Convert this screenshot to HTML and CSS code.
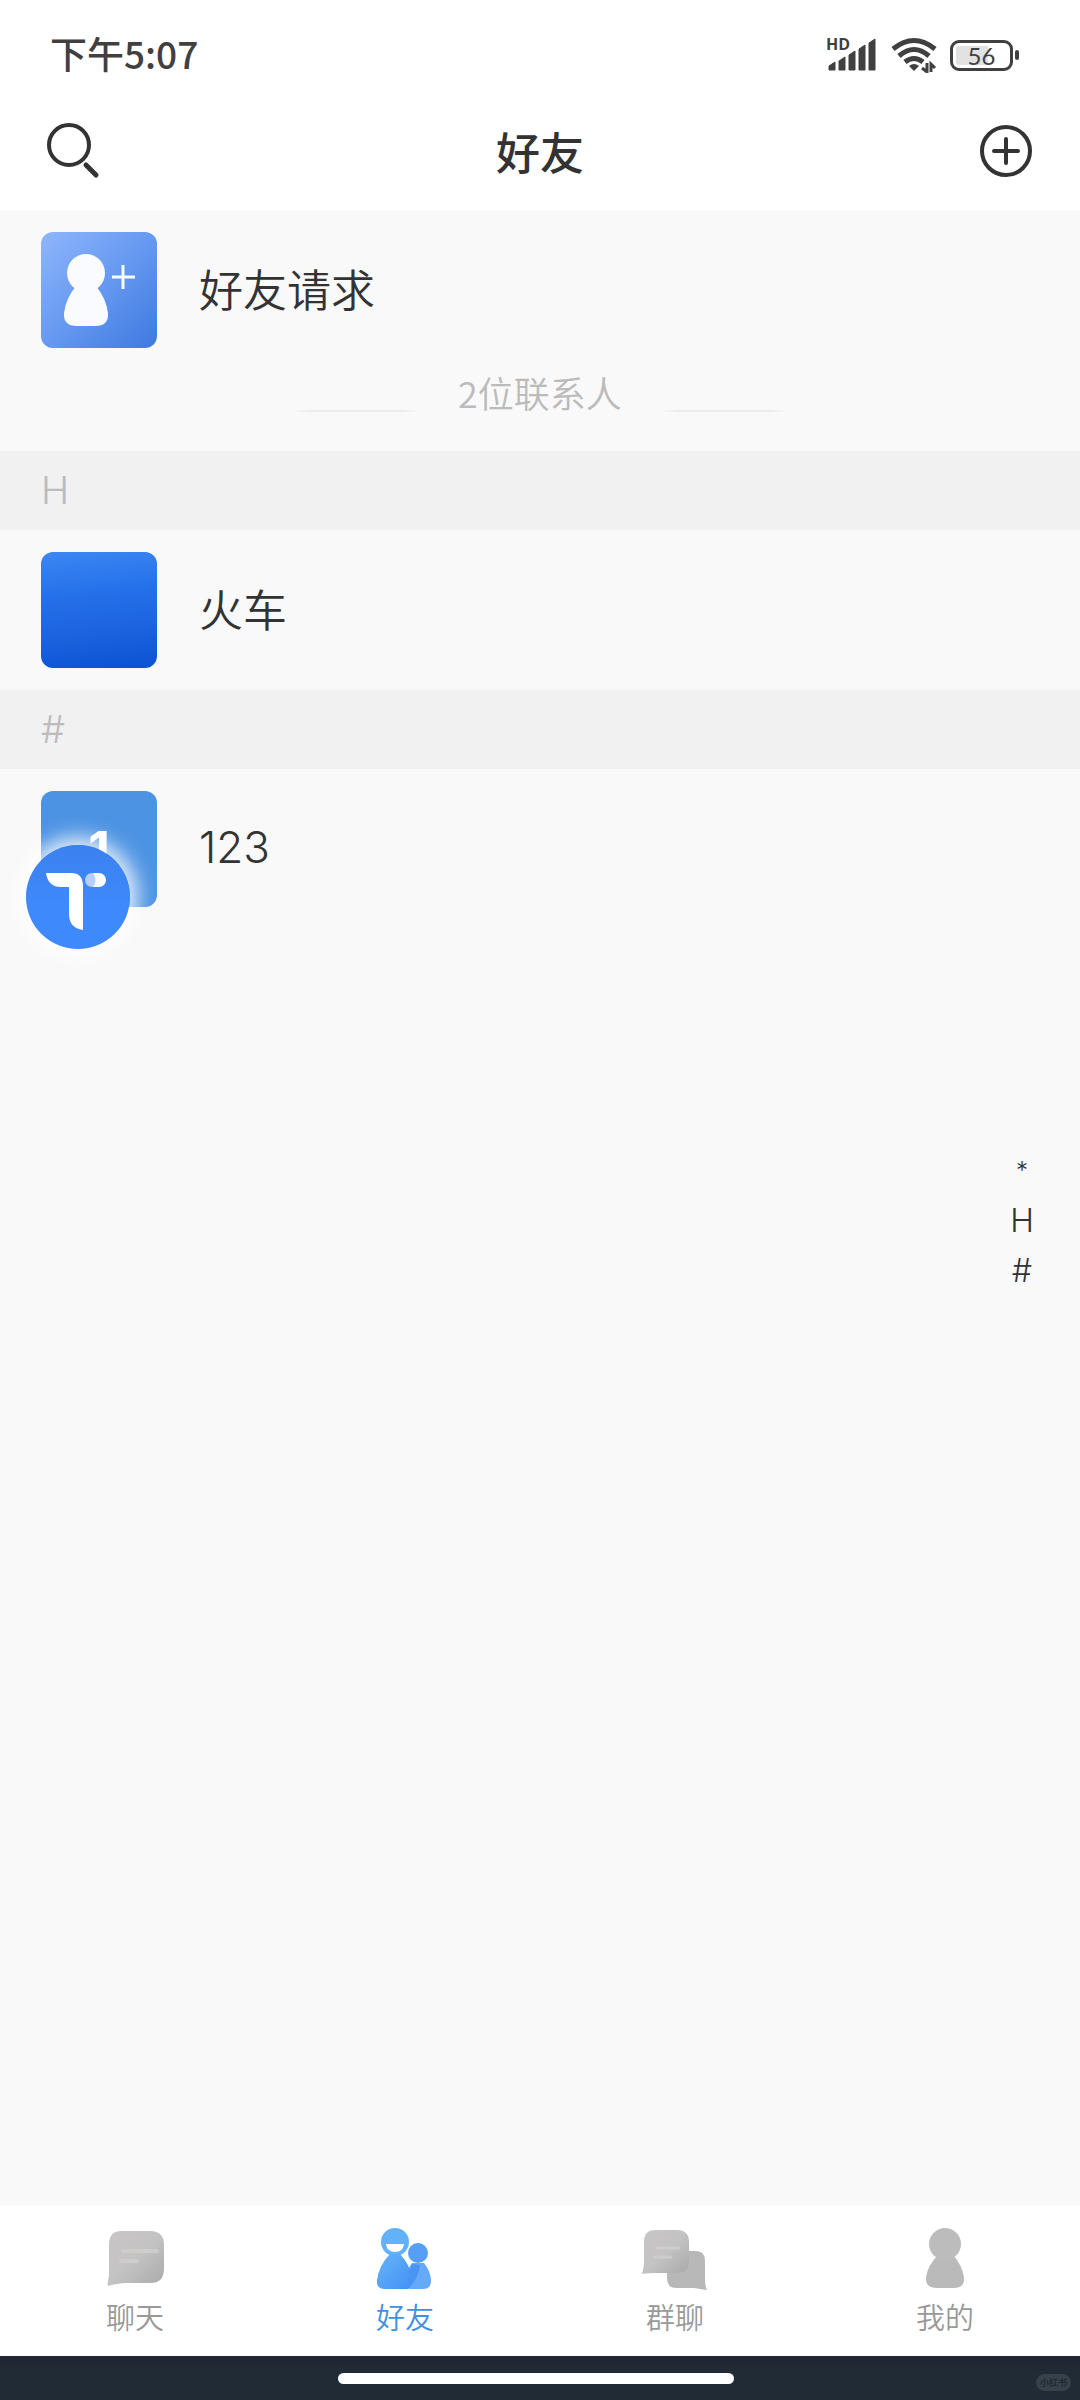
FILE: index.html
```html
<!DOCTYPE html>
<html lang="zh-CN">
<head>
<meta charset="utf-8">
<meta name="viewport" content="width=device-width, initial-scale=1">
<title>好友</title>
<link rel="stylesheet" href="styles.css">
</head>
<body>
<div class="app">
  <div class="status">
    <span class="status-time">下午5:07</span>
    <div class="status-icons">
      <svg class="signal" viewBox="0 -6 52 48" width="52" height="48" aria-hidden="true">
        <text x="0" y="13" class="hd">HD</text>
        <path d="M3 29l6-4v8H3zM13 24l6-4v13h-6zM23 18l6-4v19h-6zM33 12l6-4v25h-6zM43 6l6-4v31h-6z" fill="#404040" stroke="#404040" stroke-width="1" stroke-linejoin="round"/>
      </svg>
      <svg class="wifi" viewBox="0 0 46 36" width="46" height="36" aria-hidden="true">
        <g fill="none" stroke="#404040" stroke-width="5">
          <path d="M2 12Q23-5 44 12"/>
          <path d="M8 19Q23 6 38 19"/>
          <path d="M14 25Q23 18 32 25"/>
        </g>
        <path d="M18 29q5-4 10 0l-5 5z" fill="#404040"/>
        <path d="M36 26v9l-5-4M40 35v-8l4 4" fill="none" stroke="#404040" stroke-width="3"/>
      </svg>
      <div class="battery"><span class="battery-box">56</span><span class="battery-cap"></span></div>
    </div>
  </div>

  <header class="topbar">
    <button class="icon-btn" type="button" aria-label="搜索">
      <svg viewBox="0 0 56 56" width="56" height="56"><circle cx="25" cy="22" r="20" fill="none" stroke="#333" stroke-width="4"/><path d="M42 42l10 10" stroke="#333" stroke-width="5" stroke-linecap="round"/></svg>
    </button>
    <h1 class="title">好友</h1>
    <button class="icon-btn" type="button" aria-label="添加">
      <svg viewBox="4 0 56 56" width="56" height="56"><circle cx="30" cy="28" r="24" fill="none" stroke="#333" stroke-width="4"/><path d="M18 28h24M30 16v24" stroke="#333" stroke-width="4" stroke-linecap="round"/></svg>
    </button>
  </header>

  <main class="content">
    <a class="row" href="#requests">
      <span class="avatar avatar-request">
        <svg viewBox="0 0 116 116" width="116" height="116" aria-hidden="true">
          <circle cx="45" cy="41" r="19" fill="#f9fbff"/>
          <path d="M35 54H55Q65 66 67 81Q68 94 54 94H36Q22 94 23 81Q25 66 35 54Z" fill="#f9fbff"/>
          <path d="M71 45h23M82 33v24" stroke="#f9fbff" stroke-width="3"/>
        </svg>
      </span>
      <span class="name">好友请求</span>
    </a>
    <div class="count"><span class="rule"></span><span>2位联系人</span><span class="rule"></span></div>

    <h2 class="section" id="sec-h">H</h2>
    <a class="row" href="#train">
      <span class="avatar avatar-train"></span>
      <span class="name">火车</span>
    </a>
    <h2 class="section" id="sec-other">#</h2>
    <a class="row" href="#123">
      <span class="avatar avatar-number">1</span>
      <span class="name name-latin">123</span>
      <span class="floating">
        <svg viewBox="0 0 104 104" width="104" height="104" aria-hidden="true">
          <path d="M20 28H45Q57 28 57 41V85Q43 83 43 69V42H35Q22 42 20 28Z" fill="#fff"/>
          <circle cx="66" cy="35" r="7" fill="#b5d0ff"/>
          <path d="M67 28H73a7 7 0 0 1 0 14H67q5-7 0-14z" fill="#fff"/>
        </svg>
      </span>
    </a>

    <nav class="index" aria-label="索引">
      <a class="index-star" href="#top">*</a>
      <a href="#sec-h">H</a>
      <a href="#sec-other">#</a>
    </nav>
  </main>

  <nav class="tabs" aria-label="主导航">
    <a class="tab" href="#chat">
      <svg viewBox="0 0 68 64" width="68" height="64" aria-hidden="true">
        <defs>
          <linearGradient id="gray" x1="0" y1="0" x2="1" y2="1"><stop offset="0" stop-color="#c8c5c5"/><stop offset=".5" stop-color="#c4c3c3"/><stop offset="1" stop-color="#aaa9a9"/></linearGradient>
          <linearGradient id="blue" x1="0" y1="0" x2="1" y2="1"><stop offset="0" stop-color="#66b5f8"/><stop offset="1" stop-color="#4390f6"/></linearGradient>
        </defs>
        <path d="M20 4H49Q63 4 63 18V42Q63 56 49 56H24Q13 57 7 59Q6 58 8 48V18Q8 4 20 4Z" fill="url(#gray)"/>
        <path d="M22 24H56M20 34H36" stroke="#cfcdcc" stroke-width="4" stroke-linecap="round"/>
      </svg>
      <span>聊天</span>
    </a>
    <a class="tab tab-active" href="#friends" aria-current="page">
      <svg viewBox="0 0 68 64" width="68" height="64" aria-hidden="true">
        <circle cx="47" cy="26" r="10" fill="#559ff6"/>
        <path d="M41 36H53Q60 45 60 54Q60 62 52 62H38Q32 48 41 36Z" fill="#65a9f8"/>
        <circle cx="24" cy="15" r="14" fill="#62b2f9"/>
        <path d="M19 27H29Q39 38 41 50Q42 58 37 62H14Q5 62 6 53Q8 38 19 27Z" fill="url(#blue)"/>
        <path d="M41 37Q36 48 38 61Q47 52 49 38Z" fill="#4a94f3"/>
        <path d="M15 17H33Q32 25 24 25Q16 25 15 17Z" fill="#fff"/>
      </svg>
      <span>好友</span>
    </a>
    <a class="tab" href="#groups">
      <svg viewBox="1 0 68 64" width="68" height="64" aria-hidden="true">
        <path d="M42 24H56Q65 24 65 34V52Q65 59 67 63Q60 62 54 61H36Q27 61 27 51V36Z" fill="#b9b8b8"/>
        <path d="M15 3H37Q49 3 49 15V34Q49 46 37 46H14Q10 46 2 47Q4 41 4 35V15Q4 3 15 3Z" fill="url(#gray)"/>
        <path d="M17 21H39M14 30H31" stroke="#cfcdcc" stroke-width="3" stroke-linecap="round"/>
      </svg>
      <span>群聊</span>
    </a>
    <a class="tab" href="#me">
      <svg viewBox="0 0 68 64" width="68" height="64" aria-hidden="true">
        <path d="M27 28H42Q51 38 53 50Q54 61 43 61H26Q14 61 15 50Q17 38 27 28Z" fill="#bbbaba"/>
        <circle cx="34" cy="17" r="16" fill="#bdbcbc"/>
      </svg>
      <span>我的</span>
    </a>
  </nav>
  <footer class="gesture"><span class="home-bar"></span><span class="mark">小红书</span></footer>
</div>
</body>
</html>
```

FILE: styles.css
```css
* { box-sizing: border-box; }

body {
  margin: 0;
  background: #f9f9f9;
  color: #333;
  font-family: "Noto Sans CJK SC", sans-serif;
}

a { color: inherit; text-decoration: none; }

.app { display: flex; flex-direction: column; min-height: 100vh; }

.status {
  display: flex;
  align-items: center;
  justify-content: space-between;
  height: 110px;
  padding: 0 61px 0 50px;
  background: #fff;
  color: #404040;
}
.status-time { padding-bottom: 4px; font-size: 37px; font-weight: 500; line-height: 48px; }
.status-icons { display: flex; align-items: center; gap: 13px; }
.signal, .wifi { display: block; }
.hd { font: 700 16px "Open Sans", sans-serif; fill: #404040; }
.battery { display: flex; align-items: center; gap: 2px; }
.battery-box {
  width: 63px;
  height: 31px;
  border: 3px solid #404040;
  border-radius: 9px;
  background: linear-gradient(90deg, #e2e2e2 32px, #fff 32px) content-box;
  padding: 3px;
  font: 400 24px/19px Lato, sans-serif;
  text-align: center;
}
.battery-cap { width: 4px; height: 10px; border-radius: 2px; background: #404040; }

.topbar {
  display: flex;
  align-items: center;
  justify-content: space-between;
  height: 100px;
  padding: 0 44px 18px;
  background: #fff;
}
.icon-btn { padding: 0; border: 0; background: none; }
.icon-btn svg { display: block; overflow: visible; }
.title { margin: 0; font-size: 44px; font-weight: 500; line-height: 56px; }

.content { position: relative; flex: 1; }

.row {
  position: relative;
  display: flex;
  align-items: center;
  gap: 42px;
  height: 160px;
  padding: 0 41px;
}
.avatar {
  display: flex;
  align-items: center;
  justify-content: center;
  width: 116px;
  height: 116px;
  border-radius: 12px;
  overflow: hidden;
}
.avatar-request { background: linear-gradient(135deg, #8fb6fb, #6699f1 50%, #3d79df); }
.avatar-train { background: linear-gradient(174deg, #3c87f2, #2571ea 35%, #1d64e0 65%, #0b52d3); }
.avatar-number {
  background: #4d93e3;
  color: #fff;
  font: 700 50px Inter, sans-serif;
}
.name { padding-bottom: 4px; font-size: 44px; font-weight: 350; line-height: 56px; }
.name-latin { font-family: Inter, sans-serif; font-weight: 300; }

.floating {
  position: absolute;
  left: 26px;
  top: 76px;
  width: 104px;
  height: 104px;
  border-radius: 50%;
  background: linear-gradient(#3c80ef, #3e8afc 60%);
  box-shadow: 0 0 20px 8px rgba(255, 255, 255, .85);
}

.count {
  display: flex;
  align-items: flex-end;
  justify-content: center;
  gap: 37px;
  height: 81px;
  padding-bottom: 35px;
  color: #bbb;
  font-size: 36px;
  font-weight: 350;
  line-height: 48px;
}
.rule {
  width: 130px;
  height: 2px;
  margin-bottom: 4px;
  background: linear-gradient(90deg, transparent, #ececec 15%, #ececec 85%, transparent);
}

.section {
  height: 79px;
  margin: 0;
  padding: 0 41px;
  background: #f1f1f1;
  color: #bbb;
  font-family: Inter, sans-serif;
  font-size: 38px;
  font-weight: 300;
  line-height: 79px;
}

.index {
  position: absolute;
  top: 936px;
  right: 40px;
  display: flex;
  flex-direction: column;
  width: 36px;
  text-align: center;
  font-family: Inter, sans-serif;
  font-size: 32px;
  font-weight: 300;
  line-height: 50px;
}
.index-star { font-size: 24px; }

.tabs {
  display: grid;
  grid-template-columns: repeat(4, 1fr);
  height: 150px;
  background: #fff;
  color: #999;
}
.tab {
  display: flex;
  flex-direction: column;
  align-items: center;
  gap: 5px;
  padding-top: 21px;
  font-size: 29px;
  font-weight: 350;
  line-height: 40px;
}
.tab-active { color: #4390e0; }

.gesture {
  position: relative;
  display: flex;
  align-items: center;
  justify-content: center;
  height: 44px;
  padding-right: 8px;
  background: linear-gradient(#212632, #212b35 40%);
}
.home-bar { width: 37%; height: 11px; border-radius: 6px; background: #fff; }
.mark {
  position: absolute;
  right: 9px;
  bottom: 9px;
  padding: 0 4px;
  border-radius: 9px;
  background: #37414a;
  color: #202a33;
  font-size: 9px;
  font-weight: 700;
  line-height: 17px;
}
```
